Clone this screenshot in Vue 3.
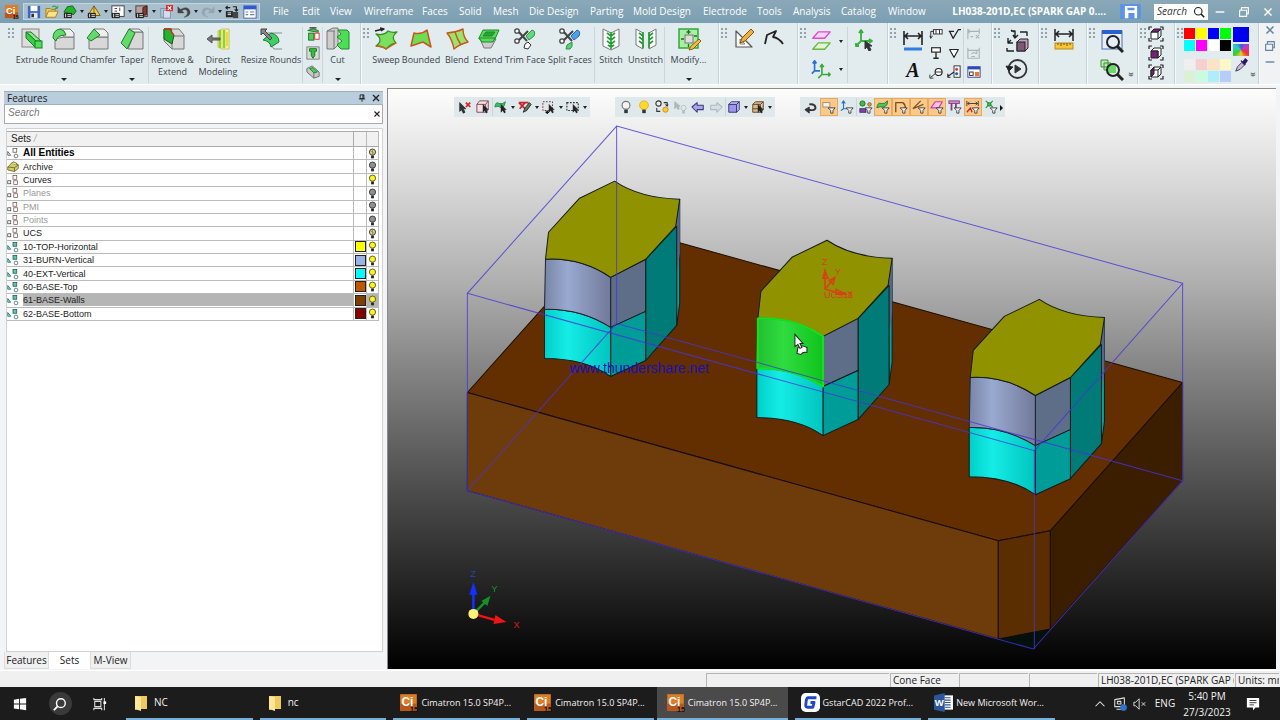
<script setup>
import { h } from 'vue'

const p = (d, fill = 'none', stroke = '#555', w = 1) =>
  `<path d="${d}" fill="${fill}" stroke="${stroke}" stroke-width="${w}" stroke-linejoin="round"/>`
const c = (x, y, r, fill = 'none', stroke = '#333', w = 1) =>
  `<circle cx="${x}" cy="${y}" r="${r}" fill="${fill}" stroke="${stroke}" stroke-width="${w}"/>`
const G = '#35d045'
const LG = '#8be38a'
const GR = '#d8d8d8'
const funnel = p('M7 9H15L12.5 12V15H10V12Z', '#fff', '#333')
const arrow = p('M8 5V14L10 12L12 15L13 14L12 11H14Z', '#222', '#222', 0.5)
const lens = c(13, 13, 6, 'none', '#222', 2) + p('M17 17L23 23', 'none', '#222', 3)
const scissors =
  p('M5 4L14 14M5 14L15 4', 'none', '#444', 2) + c(4, 4, 2.2, '#fff', '#444', 1.3) + c(4, 14, 2.2, '#fff', '#444', 1.3)
const cubeFrame =
  p('M1 4V1H4M12 1H15V4M15 12V15H12M4 15H1V12', 'none', '#222', 1.2)
const ci =
  '<rect x="1" y="1" width="14" height="14" fill="#dd7d27"/><rect x="1" y="9" width="14" height="6" fill="#b8561c"/>' +
  '<text x="7" y="11" font-size="10" font-family="Liberation Sans" font-weight="bold" fill="#fff" text-anchor="middle">Ci</text>' +
  '<text x="16" y="16" font-size="6" font-family="Liberation Sans" font-weight="bold" fill="#111" text-anchor="end">15</text>'
const mini = '<rect x="1" y="9" width="9" height="6" fill="#222"/>' + p('M3 10V14M5 11H9M5 13H9', 'none', '#eee')

const icons = {
  ci: [16, ci],
  save: [16, '<rect x="1" y="1" width="14" height="14" fill="#3c66c4"/><rect x="4" y="1" width="8" height="6" fill="#fff"/><rect x="4" y="9" width="8" height="6" fill="#e8e8e8"/><rect x="5" y="10" width="3" height="4" fill="#333"/>'],
  open: [16, p('M1 14V4H6L7 5H12V7', '#f3c65b', '#9b7a25') + p('M1 14L4 7H15L12 14Z', '#ffe08a', '#9b7a25') + p('M8 2Q12 0 14 4M14 4L11 4M14 4L15 1', 'none', '#3ea347', 1.3)],
  partg: [16, p('M1 8L5 2L11 1L15 7L12 11Z', '#22b52c', '#145a18') + mini],
  asmy: [16, p('M8 1L15 12H1Z', '#f2cd48', '#6b5412') + p('M8 1V12', 'none', '#6b5412') + mini],
  draft: [16, '<rect x="1" y="1" width="14" height="12" fill="#fff" stroke="#333"/>' + p('M4 4H7M10 3V7M4 7H7', 'none', '#333') + mini],
  nc: [16, '<rect x="1" y="1" width="13" height="12" fill="#b7a29c" stroke="#4a3530"/>' + p('M9 3L13 1V11L9 12Z', '#8c3a2c', '#3b1b15') + mini],
  close: [16, '<rect x="2" y="4" width="8" height="10" fill="#b4c6d8" stroke="#7a90a8"/><rect x="5" y="6" width="8" height="9" fill="#d3deea" stroke="#7a90a8"/><rect x="8" y="0" width="8" height="7" fill="#dd2b31"/>' + p('M10 1.5L14 5.5M14 1.5L10 5.5', 'none', '#fff', 1.4)],
  undo: [16, p('M1 2V9H8L5.5 6.5Q11 3 12 8Q12.5 12 8 14Q15 13 15 8Q13 0 4 5Z', '#444', '#444', 0.5)],
  redo: [16, p('M15 2V9H8L10.5 6.5Q5 3 4 8Q3.500 12 8 14Q1 13 1 8Q3 0 12 5Z', '#93a5b0', '#93a5b0', 0.5)],
  swap: [16, '<rect x="1" y="7" width="8" height="7" fill="#222"/><rect x="9" y="8" width="6" height="7" fill="#444"/>' + p('M1 3H6M3 1L1 3L3 5M9 2H13V6M11 5L13 7L15 5', 'none', '#222', 1.4) + p('M3 9H7M3 11H7', 'none', '#fff')],
  tbl: [16, '<rect x="1" y="1" width="14" height="14" fill="#fff" stroke="#3c5ec0"/><rect x="1" y="1" width="14" height="4" fill="#3158d2"/>' + p('M3 8H6M3 11H6M8 8H13M8 11H13', 'none', '#6f7f9c', 1.2)],
  extrude: [24, '<rect x="2" y="2" width="17" height="18" fill="#dfdcdc" stroke="#8a8480"/>' + p('M6 5L11 5L21 14L16 14Z', LG, '#1c7a26') + p('M6 5V11L16 21V14Z', G, '#1c7a26') + '<rect x="15" y="14" width="7" height="7" fill="#4be058" stroke="#1c7a26"/>'],
  round: [24, p('M12 10H22V22H3V12Z', GR, '#777') + p('M8 2H18L22 6V10H12Z', '#eee', '#777') + p('M1 11Q1 3 8 2Q13 3 14 8Q5 8 4 14Z', '#62db6a', '#237a2b')],
  chamfer: [24, p('M12 10H22V22H3V12Z', GR, '#777') + p('M8 2H18L22 6V10H12Z', '#eee', '#777') + p('M1 11L8 2L14 8L5 14Z', '#62db6a', '#237a2b')],
  taper: [24, p('M15 5H23V22H8Z', GR, '#777') + p('M9 2H19L23 5H14Z', '#eee', '#777') + p('M9 2L15 6L7 22L1 16Z', '#62db6a', '#237a2b')],
  remove: [24, p('M3 2H18L23 8V22H11L3 14Z', GR, '#777') + p('M11 9H23M11 9V22', 'none', '#777') + p('M3 2H10Q10 6 13 8L11 17L3 12Z', '#23b32e', '#155a1b') + p('M3 2H10Q10 6 13 8', 'none', '#c73326', 1.5)],
  direct: [24, p('M12 4L16 2H23V22H16L12 20Z', '#f5f0ab', '#c6c65b') + p('M14 3V21M18 3V21', 'none', '#98cf2e', 2.5) + p('M21 5V19', 'none', '#e8dc3c', 2) + p('M1 12L6 8V11H14V13H6V16Z', '#777', '#555')],
  resize: [24, p('M8 6H23M8 13L15 22H23', 'none', '#8a8a8a') + p('M4 13L12 6Q20 8 20 15L12 20Q11 14 4 13Z', '#40cf66', '#227a38') + p('M2 2L8 2L6 4L13 11L11 13L4 6L2 8Z', '#888', '#444')],
  mirror: [16, p('M2 4L8 2L14 4V6L8 5Z', '#53cc5b', '#1d6b25') + '<rect x="3" y="7" width="6" height="8" fill="#53cc5b" stroke="#1d6b25"/><rect x="10" y="7" width="5" height="7" fill="#fff" stroke="#d22"/>' + p('M4 1H12', 'none', '#333', 1.5)],
  drill: [16, '<rect x="1" y="1" width="14" height="14" fill="#d7dcd9" stroke="#777"/>' + p('M4 3H12V6H10V11L8 14L6 11V6H4Z', '#2dc33c', '#17701f')],
  hole: [16, p('M1 4L7 1L15 8V13L9 15L1 8Z', '#c9c9c9', '#666') + p('M4 4L8 3L13 8L9 9Z', '#48cf55', '#1e7a29') + p('M9 9V15', 'none', '#666')],
  cut: [24, p('M1 4L7 1H12V18L8 22H1Z', '#cfcccc', '#777') + p('M1 4H9M8 4V22', 'none', '#777') + p('M12 3H21L23 5V22H15L11 18L16 14L11 10L15 7Z', '#4cdf55', '#25852e')],
  sweep: [24, p('M2 7Q10 9 14 4Q18 6 23 5Q16 10 22 16Q17 17 12 22Q8 19 2 19Q10 13 2 7Z', '#7be05f', '#3d8a2d', 1.3) + p('M1 4L9 2M6 1L10 2L7 4', 'none', '#222', 1.4) + p('M2 19Q8 19 12 22L22 16', 'none', '#c8641e', 1.3)],
  bounded: [24, p('M2 19L5 6Q12 8 18 3L22 20L14 15Z', '#6edd51', '#c8561e', 1.5)],
  blend: [24, p('M2 6Q12 5 18 2Q18 10 23 15Q15 17 9 22Q7 12 2 6Z', '#9be46c', '#c8561e', 1.4) + p('M10 5Q12 12 16 18', 'none', '#c8561e', 1.4)],
  extend: [24, p('M4 12L8 21H15L20 12Z', '#cdcdcd', '#777') + p('M3 11L7 3H23L19 12H3Z', '#54dd5a', '#25852e') + p('M7 9L10 5H19L16 9Z', '#26a530', '#25852e') + p('M3 11H19L17 15H6Z', '#54dd5a', '#25852e')],
  trimf: [24, scissors + p('M13 9L19 3Q23 4 21 9L16 13Z', '#5edb7b', '#3a8a50') + p('M12 17L15 15L18 18L15 22L11 21Z', '#fff', '#333')],
  splitf: [24, scissors + p('M13 9L19 3Q23 4 21 9L16 13Z', '#4b9ff0', '#2c68a8') + p('M9 18L14 15Q15 20 12 22L8 22Z', '#4fd873', '#3a8a50')],
  stitch: [24, p('M4 2L12 6L20 2V19L12 23L4 19Z', '#fff', '#777') + p('M12 5V22M8 6L12 9L16 6M8 10L12 13L16 10M8 14L12 17L16 14M9 18L12 20L15 18', 'none', '#249c34', 1.6)],
  unstitch: [24, p('M2 2L9 6V22L2 18ZM22 2L15 6V22L22 18Z', '#fff', '#777') + p('M9 5V21M5 6L9 9M5 10L9 13M5 14L9 17M15 5V21M19 6L15 9M19 10L15 13M19 14L15 17', 'none', '#249c34', 1.6)],
  modify: [24, '<rect x="2" y="2" width="19" height="19" fill="#a8f0a0" stroke="#35a53f" stroke-width="1.500"/><rect x="8" y="8" width="8" height="8" fill="#ddd" stroke="#777"/>' + p('M11.500 3V7M9.500 5H13.500M11.500 17V20M4 12H7M17 9H20', 'none', '#17701f', 1.3) + p('M12 23L14 19L22 12L24 14L16 22Z', '#f3bd42', '#8b5a1b')],
  sketch: [24, p('M4 4V20H20Z', '#fff', '#555', 1.2) + p('M8 12V17H13Z', '#ddd', '#888') + p('M8 16L10 11L19 2L22 5L13 14Z', '#f0b040', '#80541a')],
  curve: [24, p('M3 17L5 8L14 4L11 10Q17 11 21 17', 'none', '#222', 1.8)],
  planes: [24, p('M3 9L9 2H22L16 9Z', '#fbd4fb', '#d84bd8', 1.5) + p('M3 21L9 14H22L16 21Z', '#dff8d2', '#6db544', 1.5)],
  ucs2: [24, p('M5 4V14H11M5 14L2 17M3 6L5 3L7 6', 'none', '#2b6fd0', 1.8) + p('M13 8V18H22M13 18L9 22M11 10L13 7L15 10M20 16L22 18L20 20', 'none', '#3cab35', 1.8)],
  ucs: [24, p('M10 4V14H20M10 14L5 19M8 6L10 3L12 6M18 12L21 14L18 16M5 16V19H8', 'none', '#36b03a', 1.8) + p('M14 14V22L16 20L18 24L20 23L18 19H21Z', '#333', '#333')],
  dim: [24, p('M3 2V16M21 2V16M4 7H20M7 4L4 7L7 10M17 4L20 7L17 10', 'none', '#222', 1.6) + p('M3 20H21', 'none', '#2f7de1', 3)],
  letter: [24, '<text x="12" y="20" text-anchor="middle" font-family="Liberation Serif" font-style="italic" font-weight="bold" font-size="20" fill="#111">A</text>'],
  tol: [16, '<rect x="5" y="3" width="10" height="5" fill="#fff" stroke="#222"/>' + p('M8 3V8M12 3V8M5 5H2V12M1 10L2 13L4 10', 'none', '#222')],
  datum: [16, '<rect x="3" y="2" width="10" height="5" fill="#fff" stroke="#222" stroke-width="1.300"/>' + p('M8 7V13M5 14H11', 'none', '#222', 1.5)],
  balloon: [16, c(11, 8, 4, '#fff', '#222', 1.3) + p('M7 8H15M7 10L2 14M1 11V15H5', 'none', '#222')],
  surf: [16, p('M2 5H8M3 5L7 13L13 3H16', 'none', '#222', 1.3)],
  tri: [16, p('M3 4H13L8 13Z', '#fff', '#222', 1.2)],
  note: [16, '<rect x="8" y="1" width="7" height="13" fill="#fff" stroke="#222"/>' + p('M8 8L1 13M1 10V14H4', 'none', '#222', 1.3) + c(11, 5, 1.3, '#d33', '#d33') + c(11, 10, 1.3, '#25c', '#25c')],
  dimx: [16, p('M1 2V14M14 2V8M1 5H14M3 3L1 5L3 7M10 9L14 13M14 9L10 13M4 11H7', 'none', '#aab2b5', 1.3)],
  dimr: [16, p('M1 2V14H14V2M1 5H14M5 9Q8 6 11 9M11 9V6M5 12H9', 'none', '#aab2b5', 1.3)],
  view: [16, '<rect x="1" y="2" width="14" height="12" fill="#fff" stroke="#2a3f9e"/><rect x="1" y="2" width="14" height="3" fill="#2b47bd"/><rect x="3" y="8" width="4" height="4" fill="none" stroke="#222"/><rect x="9" y="8" width="5" height="5" fill="#e27a33"/>'],
  exch: [24, p('M12 13L15 10H23V19L20 22H12Z', '#c79fbe', '#222') + '<rect x="12" y="13" width="8" height="9" fill="#7b5a72" stroke="#222"/>' + p('M6 2H10V8M8 6L10 9L13 6M9 3L6 1M3 9V14H8M6 11L3 14M15 3H22V7M2 19V22H9', 'none', '#222', 1.4)],
  replay: [24, c(12.500, 12, 9, 'none', '#333', 1.8) + p('M1 9L4 14L8 10Z', '#222', '#222') + p('M10 8V16L16 12Z', '#333', '#333')],
  measure: [24, p('M3 2V14M21 2V14M4 7H20M7 4L4 7L7 10M17 4L20 7L17 10', 'none', '#222', 1.5) + '<rect x="3" y="16" width="18" height="6" fill="#f5c738" stroke="#b58a1a"/>' + p('M6 16V18M9 16V19M12 16V18M15 16V19M18 16V18', 'none', '#6b5010')],
  zoomw: [24, '<rect x="2" y="2" width="20" height="18" fill="#e6eff8" stroke="#4a6fb5"/><rect x="2" y="1" width="20" height="4" fill="#2b5fd0"/>' + lens],
  zooms: [24, p('M1 3H8V10H1ZM4 6H11V13H4Z', '#b9e8b0', '#3f8f3a') + '<rect x="8" y="8" width="8" height="8" fill="#69d868"/>' + lens],
  cube1: [16, cubeFrame + p('M3 6H10V13H3Z', '#fff', '#222') + p('M3 6L6 3H13L10 6Z', '#7a1f78', '#222') + p('M13 3V10L10 13', 'none', '#222')],
  cube2: [16, cubeFrame + p('M3 6L6 3H13V10L10 13V6Z', '#fff', '#222') + p('M3 6H10V13H3Z', '#7a1f78', '#222')],
  cube3: [16, cubeFrame + p('M3 6L6 3H13V10L10 13H3Z', '#fff', '#222') + p('M3 6L6 3V10L3 13Z', '#7a1f78', '#222') + p('M3 6H10V13M10 6L13 3', 'none', '#222')],
  dropper: [16, p('M2 15L4 10L9 5L12 8L7 13Z', '#c9b8e0', '#333') + p('M8 3L13 8M10 5L13 1L15 3L12 7Z', '#2a1660', '#2a1660', 1.6)],
  floppy: [16, '<path d="M1 1H15V15H1ZM4 3V6H12V3ZM5 9V15H12V9Z" fill="#fff" fill-rule="evenodd"/>'],
  mag: [16, c(7, 7, 5, 'none', '#222', 1.5) + p('M10.500 10.500L15 15', 'none', '#222', 2)],
  min: [16, p('M3 8H13', 'none', 'currentColor', 1.6)],
  restore: [16, p('M3 6H11V13H3ZM5 6V3H13V10H11', 'none', 'currentColor', 1.3)],
  x: [16, p('M4 4L12 12M12 4L4 12', 'none', 'currentColor', 1.8)],
  pin: [16, p('M5 3H11V9H5ZM9.500 3V9M3 9.500H13M8 10V14', 'none', '#222', 1.5)],
  setall: [16, p('M1 6V11L5 11Z', '#fff', '#444') + '<rect x="8" y="2" width="5" height="5" fill="#fff" stroke="#555"/>' + c(12, 12, 2.5, '#fff', '#555')],
  arch: [16, p('M1 8L6 3L15 5V10L10 14L1 12Z', '#d5cf6a', '#5a561a') + p('M1 8L10 9V14M10 9L15 5', 'none', '#5a561a') + p('M6 3L8 1L13 3V5', '#e8e3a0', '#5a561a')],
  setgrp: [16, '<rect x="1" y="9" width="4" height="4" fill="#fff" stroke="#444"/><rect x="8" y="2" width="5" height="5" fill="#fff" stroke="#755"/><rect x="9" y="9" width="5" height="5" fill="#fff" stroke="#755"/>'],
  setuser: [16, p('M1 6V11L5 11Z', '#7fd', '#255') + '<rect x="8" y="2" width="5" height="5" fill="#5cc9a8" stroke="#255"/>' + c(12, 12, 2.5, '#fff', '#366')],
  bulbon: [16, c(8, 6, 4.5, '#fbf32a', '#55520c', 1.3) + '<rect x="6" y="11" width="4" height="4" fill="#222"/>'],
  bulbhalf: [16, c(8, 6, 4.5, '#d8da7a', '#333', 1.3) + p('M5 4L11 8M8 2V10', 'none', '#777') + '<rect x="6" y="11" width="4" height="4" fill="#222"/>'],
  bulboff: [16, c(8, 6, 4.5, '#909090', '#333', 1.3) + '<rect x="6" y="11" width="4" height="4" fill="#222"/>'],
  bulbw: [16, c(8, 6, 4.5, '#f4f4f4', '#777', 1.3) + '<rect x="6" y="11" width="4" height="4" fill="#333"/>'],
  bulby: [16, c(8, 6, 5, '#ffd92e', '#e0ab12') + '<rect x="6" y="11" width="4" height="4" fill="#333"/>'],
  bulbsw: [16, c(4, 4, 3, '#eee', '#333', 1.3) + c(12, 11, 3, '#ffc92e', '#c8900c') + p('M10 3H14V7M2 9V13H6M12 5L14 7L15 5', 'none', '#333', 1.2)],
  bulbp: [16, p('M2 2V10L4 8L6 11L7 10L6 7H8Z', '#aeb8bb', '#aeb8bb') + c(12, 9, 3, 'none', '#b5bfc2') + p('M11 12H13V15H11Z', '#b5bfc2', '#b5bfc2')],
  left: [16, p('M1 8L7 3V6H14V11H7V14Z', '#aaa6e6', '#3c3a80', 1.2)],
  right: [16, p('M15 8L9 3V6H2V11H9V14Z', '#d8dfe1', '#aeb8bb', 1.2)],
  box: [16, p('M2 5H11V14H2Z', '#9d96ea', '#2e2a72') + p('M2 5L5 2H14L11 5ZM14 2V11L11 14V5Z', '#c4bff6', '#2e2a72')],
  boxsel: [16, p('M2 5H11V14H2ZM2 5L5 2H14L11 5M14 2V11L11 14M2 10H11', '#d9b98c', '#5c3a18') + arrow],
  pickx: [16, p('M2 3V13L4 11L6 15L8 14L6 10H9Z', '#333', '#333') + p('M9 3L14 8M14 3L9 8', 'none', '#d8202a', 2)],
  pickbox: [16, p('M1 5L4 1H14V11L11 14H1Z', '#f3dfe4', '#7d3c4e') + p('M1 5H11V14M11 5L14 1', 'none', '#7d3c4e') + arrow],
  pickf: [16, p('M1 8Q2 1 6 4Q10 5 13 2Q12 8 9 9Q4 6 1 8Z', '#3bbd68', '#238547') + arrow],
  pickp: [16, p('M1 3H12M1 3L8 10M8 3L2 10', 'none', '#c8202a', 2) + p('M6 14L8 9L13 3L15 5L10 12Z', '#5b7f58', '#222')],
  pickr: [16, '<rect x="1" y="2" width="11" height="10" fill="none" stroke="#7d1f2e" stroke-dasharray="2 1.500"/>' + p('M4 14H8M6 12V16', 'none', '#111', 1.5) + arrow],
  pickd: [16, '<rect x="1" y="3" width="13" height="9" fill="none" stroke="#333" stroke-width="1.300" stroke-dasharray="2 1.500"/>' + arrow],
  back: [16, p('M4 11Q14 13 13 8Q12 4 6 5', 'none', '#333', 2.2) + p('M6 8L1 11L6 15Z', '#333', '#333')],
  f1: [16, '<rect x="1" y="3" width="8" height="5" fill="#f7f2dc" stroke="#998877"/>' + funnel],
  f2: [16, p('M4 2V10H10M2 4L4 1L6 4M1 12L4 10', 'none', '#2b6fd0', 1.3) + funnel],
  f3: [16, c(4, 4, 3, '#42bb46', '#1d6b25') + c(12, 5, 2, '#e89a4b', '#8a5218') + '<rect x="1" y="10" width="7" height="4" fill="#7c4aa8" stroke="#3e2260"/>' + funnel],
  f4: [16, p('M1 9Q2 2 6 4Q10 5 13 1Q14 6 9 8Q4 7 1 9Z', '#4cc957', '#1d7a2b') + funnel],
  f5: [16, p('M2 14V3L10 3Q13 5 13 9', 'none', '#775021', 1.5) + funnel],
  f6: [16, p('M1 10L10 1M1 10L13 5', 'none', '#775021', 1.3) + funnel],
  f7: [16, p('M1 9L6 2H14L10 9Z', '#ffc2ec', '#d33fa0', 1.3) + funnel],
  f8: [16, '<rect x="1" y="1" width="12" height="3" fill="#d489c8" stroke="#843a78"/>' + p('M4 4V12M9 4V9', 'none', '#843a78', 2) + funnel],
  f9: [16, p('M1 1V7M14 1V7M2 4H13M4 2L2 4L4 6M11 2L13 4L11 6', 'none', '#333') + p('M1 14L5 9L7 14', 'none', '#c22', 1.4) + funnel],
  f10: [16, p('M2 1L10 8M10 1L2 9', 'none', '#259a3d', 1.5) + c(6, 5, 2, '#3bbf55', '#1d7a2b') + funnel],
  win: [16, '<path d="M1 3L7 2V7.500H1ZM8 2L15 1V7.500H8ZM1 8.500H7V14L1 13ZM8 8.500H15V15L8 14Z" fill="#fff"/>'],
  magw: [16, c(9, 7, 5, 'none', '#fff', 1.6) + p('M5.500 10.500L1 15', 'none', '#fff', 2)],
  task: [16, p('M1 1V3H10V1M1 15V13H10V15M2 5H9V11H2ZM13 1V15', 'none', '#ddd', 1.2) + '<rect x="12" y="5" width="3" height="3" fill="#fff"/>'],
  folder: [16, '<path d="M2 1H14V14H7L2 15Z" fill="#f0c95c"/><path d="M2 1L8 2V16L2 14Z" fill="#ffe69a"/>'],
  gstar: [16, '<rect width="16" height="16" rx="4" fill="#fff"/>' + p('M13 4H6Q5 4 4.500 6L4 10Q3.800 12 5.500 12H10L11 8H8', 'none', '#1f49c8', 2.4)],
  word: [16, '<rect x="7" y="2" width="9" height="12" fill="#fff"/>' + p('M9 4H14M9 6H14M9 8H14M9 10H14M9 12H14', 'none', '#2b579a') + '<path d="M0 2L9 0V16L0 14Z" fill="#2b579a"/><text x="4.500" y="11" font-size="8" font-family="Liberation Sans" font-weight="bold" fill="#fff" text-anchor="middle">W</text>'],
  up: [16, p('M2 11L8 5L14 11', 'none', '#eee', 1.4)],
  tray: [16, p('M2 3L13 1V11H2ZM5 8V5H9V8H5M4 14H9', 'none', '#ddd', 1.2) + c(12, 12, 3.5, '#2f74c8', '#2f74c8')],
  vol: [16, p('M1 6H3L7 2V14L3 10H1ZM10 6L14 10M14 6L10 10', 'none', '#ddd', 1.1)],
  notif: [16, '<path d="M1 1H15V12H11L8 15V12H1Z" fill="#fff"/>' + p('M4 4H12M4 6.500H12M4 9H9', 'none', '#222')],
}
const Ico = (props) =>
  h('svg', { viewBox: `0 0 ${icons[props.n][0]} ${icons[props.n][0]}`, 'aria-hidden': 'true', innerHTML: icons[props.n][1] })
Ico.props = ['n']

const quick = [
  ['save', 'Save'], ['open', 'Open'], ['partg', 'New part', 1], ['asmy', 'New assembly', 1], ['draft', 'New drafting', 1],
  ['nc', 'New NC', 1], ['close', 'Close'], ['undo', 'Undo', 1], ['redo', 'Redo', 1], ['swap', 'Switch'], ['tbl', 'Table'],
]
const menus = ['File', 'Edit', 'View', 'Wireframe', 'Faces', 'Solid', 'Mesh', 'Die Design', 'Parting', 'Mold Design', 'Electrode', 'Tools', 'Analysis', 'Catalog', 'Window']
const solid = [
  { n: 'extrude', l: ['Extrude'] }, { n: 'round', l: ['Round'], d: 1 }, { n: 'chamfer', l: ['Chamfer'] }, { n: 'taper', l: ['Taper'], d: 1 },
  { n: 'remove', l: ['Remove &', 'Extend'], s: 1 }, { n: 'direct', l: ['Direct', 'Modeling'] }, { n: 'resize', l: ['Resize Rounds'] },
]
const faces = [
  { n: 'sweep', l: ['Sweep'] }, { n: 'bounded', l: ['Bounded'] }, { n: 'blend', l: ['Blend'] }, { n: 'extend', l: ['Extend'] },
  { n: 'trimf', l: ['Trim Face'] }, { n: 'splitf', l: ['Split Faces'] }, { n: 'stitch', l: ['Stitch'], s: 1 },
  { n: 'unstitch', l: ['Unstitch'] }, { n: 'modify', l: ['Modify...'], s: 1, d: 1 },
]
const bright = ['#f00', '#ff0', '#00f', '#0f0', '#0ff', '#f0f', '#fff', '#000']
const pale = ['#efefef', '#f8cfcf', '#fbe3c3', '#fbf8c6', '#dcf0d4', '#c8fbe0', '#aeeefb', '#b5cdf8']
const sets = [
  ['All Entities', 'setall', '', 'bulbhalf', 'bold'], ['Archive', 'arch', '', 'bulboff'], ['Curves', 'setgrp', '', 'bulbon'],
  ['Planes', 'setgrp', '', 'bulboff', 'dim'], ['PMI', 'setgrp', '', 'bulboff', 'dim'], ['Points', 'setgrp', '', 'bulboff', 'dim'],
  ['UCS', 'setgrp', '', 'bulbhalf'], ['10-TOP-Horizontal', 'setuser', '#ffff00', 'bulbon'], ['31-BURN-Vertical', 'setuser', '#9ab4e4', 'bulbon'],
  ['40-EXT-Vertical', 'setuser', '#00ffff', 'bulbon'], ['60-BASE-Top', 'setuser', '#bf5600', 'bulbon'],
  ['61-BASE-Walls', 'setuser', '#7d3e00', 'bulbon', 'sel'], ['62-BASE-Bottom', 'setuser', '#870000', 'bulbon'],
]
const floats = [
  [['pickx', 'Clear picks'], ['pickbox', 'Pick entity'], ['pickf', 'Pick face', 'ds'], ['pickp', 'Unpick', 'd'], ['pickr', 'Add by box', 'd'], ['pickd', 'Pick by box', 'd']],
  [['bulbw', 'Hide'], ['bulby', 'Show'], ['bulbsw', 'Toggle'], ['bulbp', 'Hide picked'], ['left', 'Previous'], ['right', 'Next'], ['box', 'Shading', 'ds'], ['boxsel', 'Render', 'd']],
  [['back', 'Reset'], ['f1', 'Filter sets', 'o'], ['f2', 'Filter UCS'], ['f3', 'Filter all', 's'], ['f4', 'Filter faces', 'o'], ['f5', 'Filter curves', 'o'], ['f6', 'Filter edges', 'o'], ['f7', 'Filter planes', 'o'], ['f8', 'Filter text'], ['f9', 'Filter dimensions', 'o'], ['f10', 'Filter points']],
]
const has = (v, k) => (v || '').includes(k)
const prisms = [{ x: 0, y: 0 }, { x: 212, y: 59 }, { x: 424, y: 118 }]
const tasks = [
  ['folder', 'NC'], ['folder', 'nc'], ['ci', 'Cimatron 15.0 SP4P...'], ['ci', 'Cimatron 15.0 SP4P...'], ['ci', 'Cimatron 15.0 SP4P...', 1],
  ['gstar', 'GstarCAD 2022 Prof...'], ['word', 'New Microsoft Wor...'],
]
</script>

<template>
  <div class="app">
    <header class="title">
      <Ico n="ci" class="logo" />
      <div class="quick">
        <button v-for="q in quick" :key="q[0]" :aria-label="q[1]" :class="{ combo: q[2] }">
          <Ico :n="q[0]" class="i14" /><i v-if="q[2]" class="car"></i>
        </button>
      </div>
      <nav class="menu"><button v-for="m in menus" :key="m">{{ m }}</button></nav>
      <strong class="doc">LH038-201D,EC (SPARK GAP 0....</strong>
      <button class="quicksave" aria-label="Save document"><Ico n="floppy" class="i14" /></button>
      <label class="find"><input aria-label="Search commands" placeholder="Search" /><Ico n="mag" class="i12" /></label>
      <div class="win">
        <button aria-label="Minimize"><Ico n="min" class="i14" /></button>
        <button aria-label="Restore"><Ico n="restore" class="i14" /></button>
        <button aria-label="Close"><Ico n="x" class="i14" /></button>
      </div>
    </header>

    <div class="ribbon">
      <section class="grp g-solid">
        <i class="grip"></i>
        <button v-for="b in solid" :key="b.n" class="big" :class="{ sep: b.s }">
          <Ico :n="b.n" class="i24" /><span v-for="t in b.l" :key="t">{{ t }}</span><i v-if="b.d" class="car low"></i>
        </button>
        <div class="stack sep">
          <button aria-label="Mirror"><Ico n="mirror" class="i14" /></button>
          <button aria-label="Drill"><Ico n="drill" class="i14" /></button>
          <button aria-label="Hole"><Ico n="hole" class="i14" /></button>
        </div>
        <button class="big sep"><Ico n="cut" class="i24" /><span>Cut</span><i class="car low"></i></button>
      </section>
      <section class="grp g-faces">
        <i class="grip"></i>
        <button v-for="b in faces" :key="b.n" class="big" :class="{ sep: b.s }">
          <Ico :n="b.n" class="i24" /><span v-for="t in b.l" :key="t">{{ t }}</span><i v-if="b.d" class="car low"></i>
        </button>
      </section>
      <section class="grp g-sketch">
        <i class="grip"></i>
        <button class="big" aria-label="Sketcher"><Ico n="sketch" class="i24" /></button>
        <button class="big" aria-label="Composite"><Ico n="curve" class="i24" /></button>
      </section>
      <section class="grp g-planes">
        <i class="grip"></i>
        <div class="pair">
          <button aria-label="Planes"><Ico n="planes" class="i22" /></button>
          <button aria-label="UCS list"><Ico n="ucs2" class="i22" /></button>
        </div>
        <div class="pair"><i class="car"></i><i class="car"></i></div>
        <button class="big sep" aria-label="Activate UCS"><Ico n="ucs" class="i24" /></button>
      </section>
      <section class="grp g-dim">
        <i class="grip"></i>
        <div class="pair">
          <button aria-label="Dimension"><Ico n="dim" class="i24" /></button>
          <button aria-label="Text"><Ico n="letter" class="i24" /></button>
        </div>
        <div class="stack">
          <button aria-label="Tolerance"><Ico n="tol" class="i14" /></button>
          <button aria-label="Datum"><Ico n="datum" class="i14" /></button>
          <button aria-label="Balloon"><Ico n="balloon" class="i14" /></button>
        </div>
        <div class="stack">
          <button aria-label="Surface finish"><Ico n="surf" class="i14" /></button>
          <button aria-label="Symbol"><Ico n="tri" class="i14" /></button>
          <button aria-label="Note"><Ico n="note" class="i14" /></button>
        </div>
        <div class="stack sep">
          <button aria-label="Delete dimension" disabled><Ico n="dimx" class="i14" /></button>
          <button aria-label="Update dimension" disabled><Ico n="dimr" class="i14" /></button>
          <button aria-label="View"><Ico n="view" class="i14" /></button>
        </div>
      </section>
      <section class="grp g-exch">
        <i class="grip"></i>
        <div class="pair">
          <button aria-label="Exchange"><Ico n="exch" class="i24" /></button>
          <button aria-label="Replay"><Ico n="replay" class="i24" /></button>
        </div>
      </section>
      <section class="grp g-meas">
        <i class="grip"></i>
        <button class="big" aria-label="Measure"><Ico n="measure" class="i24" /></button>
      </section>
      <section class="grp g-zoom">
        <i class="grip"></i>
        <div class="pair">
          <button aria-label="Zoom window"><Ico n="zoomw" class="i24" /></button>
          <button aria-label="Zoom selection"><Ico n="zooms" class="i24" /></button>
        </div>
        <span class="more">&#187;</span>
      </section>
      <section class="grp g-cube">
        <i class="grip"></i>
        <div class="stack">
          <button aria-label="Top view"><Ico n="cube1" class="i16" /></button>
          <button aria-label="Front view"><Ico n="cube2" class="i16" /></button>
          <button aria-label="Side view"><Ico n="cube3" class="i16" /></button>
        </div>
      </section>
      <section class="grp g-color">
        <i class="grip"></i>
        <div class="pal">
          <div class="sw"><button v-for="b in bright" :key="b" :aria-label="b" :style="{ background: b }"></button></div>
          <div class="sw"><button v-for="b in pale" :key="b" :aria-label="b" :style="{ background: b }"></button></div>
        </div>
        <div class="cur">
          <button class="blue" aria-label="Current colour"></button>
          <button class="spec" aria-label="More colours"></button>
          <button aria-label="Pick colour"><Ico n="dropper" class="i14" /></button>
        </div>
        <span class="more">&#187;</span>
      </section>
      <div class="mdi">
        <button aria-label="Close document"><Ico n="x" class="i14" /></button>
        <button aria-label="Restore document"><Ico n="restore" class="i14" /></button>
        <button aria-label="Minimize document"><Ico n="min" class="i14" /></button>
      </div>
    </div>

    <main class="main">
      <aside class="side">
        <div class="phead"><span>Features</span>
          <button aria-label="Pin"><Ico n="pin" class="i10" /></button>
          <button aria-label="Close panel"><Ico n="x" class="i12" /></button>
        </div>
        <div class="psearch"><input aria-label="Search features" placeholder="Search" /><button aria-label="Clear search"><Ico n="x" class="i10" /></button></div>
        <div class="list">
          <table>
            <thead><tr><th>Sets <i>/</i></th><th class="cc"></th><th class="cb"></th></tr></thead>
            <tbody>
              <tr v-for="s in sets" :key="s[0]" :class="s[4]">
                <td class="name"><div><Ico :n="s[1]" class="i12" /><span>{{ s[0] }}</span></div></td>
                <td class="cc"><b v-if="s[2]" :style="{ background: s[2] }"></b></td>
                <td class="cb"><Ico :n="s[3]" class="i11" /></td>
              </tr>
            </tbody>
          </table>
        </div>
        <div class="tabs"><button>Features</button><button class="on">Sets</button><button>M-View</button></div>
      </aside>

      <section class="view">
        <svg class="scene" viewBox="388 89 888 579" preserveAspectRatio="xMidYMid slice">
          <defs>
            <linearGradient id="gb"><stop offset="0" stop-color="#7885a6" /><stop offset=".35" stop-color="#99a9d0" /><stop offset="1" stop-color="#72799a" /></linearGradient>
            <linearGradient id="gc"><stop offset="0" stop-color="#00cfc9" /><stop offset=".35" stop-color="#16ece6" /><stop offset="1" stop-color="#00c4be" /></linearGradient>
            <linearGradient id="gg"><stop offset="0" stop-color="#20bf30" /><stop offset=".4" stop-color="#30dc40" /><stop offset="1" stop-color="#0fc41c" /></linearGradient>
          </defs>
          <g stroke="#1c0e00" stroke-linejoin="round">
            <path d="M468 392L617 225L1182 382L1050 530L998 540Z" fill="#632e00" />
            <path d="M468 392L998 540V638L468 490Z" fill="#6e3b0a" />
            <path d="M998 540L1050 530V628L998 638Z" fill="#5a2e00" />
            <path d="M1050 530L1182 382V480L1050 628Z" fill="#3b1d00" />
            <path d="M998 638L1050 628L1033 648Z" fill="#04100c" stroke="none" />
          </g>
          <g v-for="(q, k) in prisms" :key="k" :transform="`translate(${q.x} ${q.y})`" stroke="#111c1c" stroke-linejoin="round">
            <path d="M676 226L680 199V303L677 325Z" fill="#0b9e9a" />
            <path d="M676 226L680 199V253L677 275Z" fill="#56658a" stroke="none" />
            <path d="M646 259L677 226V325L646 360Z" fill="#007b77" />
            <path d="M611 277L646 259V311L611 327Z" fill="#5f6e88" />
            <path d="M611 327L646 311V360L611 376Z" fill="#009d98" />
            <path d="M545 309Q581 308 611 327V376Q586 358 545 358Z" fill="url(#gc)" />
            <path d="M546 259Q581 257 611 277V327Q581 308 545 309Z" :fill="k === 1 ? 'url(#gg)' : 'url(#gb)'" :stroke="k === 1 ? '#12e020' : '#1c2434'" />
            <path d="M615 181Q640 198 680 199L676 226L646 259L611 277Q581 257 546 259L549 232L580 198Z" fill="#919200" />
            <path v-if="k === 1" d="M611 277Q581 257 546 259V309Q581 308 611 327Z" fill="none" stroke="#12e020" stroke-width="2" />
          </g>
          <g class="wire">
            <path d="M617 126L1182 283L1034 450L468 293Z" />
            <path d="M617 323L1182 480L1033 648L468 490Z" />
            <path d="M617 126V323M1182 283V480M1034 450V648M468 293V490" />
          </g>
          <text class="mark" x="570" y="373">www.thundershare.net</text>
          <g fill="none" stroke="#d8401c" stroke-width="1.5">
            <path d="M825 289V271M823 278L825 270L828 278ZM825 289L834 278M829 280L835 277L833 284ZM825 289L845 294M836 289L847 294L836 294Z" />
          </g>
          <g class="ucs"><text x="822" y="265">Z</text><text x="835" y="275">Y</text><text x="847" y="297">X</text><text x="824" y="298">UCS12</text></g>
          <g fill="#fff" stroke="#222">
            <path d="M798 347Q802 344 807 347V352Q803 351 801 354L797 353Z" />
            <path d="M795 334V346L798 344L800 348L802 347L800 343H803Z" />
          </g>
          <g stroke-width="2.5">
            <path d="M474 613V590" stroke="#1430ff" /><path d="M470 594L474 581L478 594Z" fill="#1430ff" />
            <path d="M474 613L486 601" stroke="#149028" /><path d="M482 600L491 595L488 605Z" fill="#149028" />
            <path d="M474 613L495 619" stroke="#f01414" /><path d="M496 614L507 621L494 623Z" fill="#f01414" />
            <circle cx="474" cy="613" r="5" fill="#fff27a" />
          </g>
          <g class="axis"><text x="471" y="576" fill="#2a40b0">Z</text><text x="492" y="591" fill="#1c9030">Y</text><text x="514" y="627" fill="#e01818">X</text></g>
        </svg>
        <div class="floats">
          <div v-for="(f, k) in floats" :key="k" class="float">
            <button v-for="b in f" :key="b[0]" :aria-label="b[1]" :class="{ combo: has(b[2], 'd'), sep: has(b[2], 's'), orange: has(b[2], 'o') }">
              <Ico :n="b[0]" class="i14" /><i v-if="has(b[2], 'd')" class="car"></i>
            </button>
            <i v-if="k === 2" class="car side-car"></i>
          </div>
        </div>
      </section>
    </main>

    <footer class="status">
      <span class="blank"></span><span></span><span>Cone Face</span><span></span><span></span><span>LH038-201D,EC (SPARK GAP (</span><span>Units: mm</span>
    </footer>

    <div class="taskbar">
      <button class="sys" aria-label="Start"><Ico n="win" class="i14" /></button>
      <button class="sys" aria-label="Search"><em><Ico n="magw" class="i14" /></em></button>
      <button class="sys" aria-label="Task view"><Ico n="task" class="i14" /></button>
      <div class="apps">
        <button v-for="(t, k) in tasks" :key="k" :class="{ on: t[2], fold: k < 2 }"><Ico :n="t[0]" class="ticon" /><span>{{ t[1] }}</span></button>
      </div>
      <div class="tray">
        <button aria-label="Hidden icons"><Ico n="up" class="i12" /></button>
        <button aria-label="Sync"><Ico n="tray" class="i14" /></button>
        <button aria-label="Volume"><Ico n="vol" class="i14" /></button>
        <span class="lang">ENG</span>
        <time class="clock">5:40 PM<br />27/3/2023</time>
        <button aria-label="Notifications"><Ico n="notif" class="i14" /></button>
      </div>
    </div>
  </div>
</template>

<style>
body { background: #f0f0f0; }
</style>

<style scoped>
.app { display: flex; flex-direction: column; height: 100vh; overflow: hidden; font: 10px/13px "Open Sans", "Noto Sans", sans-serif; color: #222; background: #f0f0f0; }
.app * { box-sizing: border-box; }
button { display: flex; align-items: center; justify-content: center; margin: 0; padding: 0; border: 0; background: none; font: inherit; color: inherit; white-space: nowrap; }
input { min-width: 0; padding: 0; border: 0; outline: 0; background: none; font: inherit; font-style: italic; }
svg { display: block; flex: none; }
.i10 { width: 10px; height: 10px; } .i11 { width: 11px; height: 11px; } .i12 { width: 12px; height: 12px; }
.i14 { width: 14px; height: 14px; } .i16 { width: 16px; height: 16px; } .i22 { width: 22px; height: 22px; } .i24 { width: 24px; height: 24px; }
.car { flex: none; border: 2px solid transparent; border-top: 3px solid #222; border-bottom: 0; }

.title { display: flex; align-items: center; flex: none; height: 23px; background: linear-gradient(#8ba8b8, #7a9fb2); color: #fff; }
.logo { width: 15px; height: 15px; margin: 0 4px; }
.quick { display: flex; align-items: center; flex: none; width: 237px; height: 17px; padding-left: 1px; border: 1px solid #c5d5dd; background: #a9c0cc; }
.quick button { width: 18px; }
.quick .combo { width: 24px; gap: 3px; }
.menu { display: grid; grid-template-columns: 29px 28px 34px 58px 37px 34px 36px 61px 43px 70px 54px 36px 48px 47px 50px; margin-left: 13px; }
.menu button { justify-content: flex-start; }
.doc { margin-left: auto; white-space: nowrap; }
.quicksave { flex: none; width: 21px; height: 15px; margin: 0 13px 0 14px; background: #5c93e4; }
.find { display: flex; flex: none; align-items: center; width: 54px; height: 16px; padding: 0 3px; background: #fff; }
.find input { flex: 1; width: 30px; }
.find input::placeholder { color: #333; opacity: 1; }
.win { display: flex; flex: none; }
.win button { width: 24px; }

.ribbon { display: flex; flex: none; height: 62px; background: #e2ecef; border-bottom: 1px solid #fff; padding-left: 6px; color: #3b4348; }
.grp { display: grid; flex: none; align-items: stretch; border-right: 1px solid #c6d1d6; box-shadow: 1px 0 #f6fafb; padding-top: 4px; }
.grip { width: 8px; height: 12px; margin-left: 1px; background: radial-gradient(circle, #8fa2ae 1px, transparent 1px) 0 0 / 4px 4px; }
.big { flex-direction: column; justify-content: flex-start; position: relative; height: 56px; font-size: 9px; }
.big span { line-height: 12px; }
.big span:first-of-type { margin-top: 3px; }
.low { position: absolute; top: 51px; border-width: 3px; border-bottom: 0; }
.sep { border-left: 1px solid #ccd6da; }
.g-solid { grid-template-columns: 10px 32px 32px 36px 32px 48px 44px 62px 20px 30px; width: 355px; }
.g-faces { grid-template-columns: 11px 28px 42px 30px 32px 42px 48px 33px 37px 48px; width: 358px; }
.g-sketch { grid-template-columns: 10px 30px 30px; width: 79px; }
.g-planes { grid-template-columns: 10px 26px 13px 31px; width: 90px; }
.g-dim { grid-template-columns: 10px 29px 18px 18px 20px; width: 104px; }
.g-exch { grid-template-columns: 10px 30px; width: 47px; }
.g-meas { grid-template-columns: 10px 30px; width: 48px; }
.g-zoom { grid-template-columns: 10px 30px 10px; width: 51px; }
.g-cube { grid-template-columns: 9px 18px; width: 37px; }
.g-color { grid-template-columns: 9px 48px 17px 9px; width: 84px; }
.stack { display: flex; flex-direction: column; align-items: center; gap: 5px; height: 56px; }
.stack .i16 { margin: -1px 0; }
.pair { display: grid; grid-template-rows: 28px 28px; place-items: center; }
.more { align-self: end; transform: rotate(90deg); width: 9px; line-height: 9px; margin-bottom: 3px; }
.pal { display: grid; align-content: start; gap: 8px; padding-top: 1px; }
.sw { display: grid; grid-template-columns: repeat(4, 11px); grid-auto-rows: 11px; gap: 1px; }
.cur { display: flex; flex-direction: column; gap: 2px; align-items: center; }
.blue { width: 16px; height: 15px; background: #0000f0; }
.spec { width: 16px; height: 12px; background: conic-gradient(#36c, #c3c, #e33, #ec3, #3c3, #3cc, #36c); }
.mdi { display: flex; flex-direction: column; gap: 2px; margin-left: auto; width: 20px; align-items: center; background: #f0f2f3; color: #6484a6; }

.main { display: flex; flex: 1; min-height: 0; padding: 3px 4px 1px; background: #f3f4f5; }
.side { display: flex; flex-direction: column; flex: none; width: 379px; margin: 3px 4px 0 0; }
.phead { display: flex; align-items: center; gap: 3px; height: 14px; padding: 0 1px 0 3px; background: #b9cddd; border: 1px solid #9bb0c0; border-width: 1px 0; }
.phead span { flex: 1; }
.psearch { display: flex; height: 19px; border: 1px solid #aaa; border-top: 0; background: #fff; }
.psearch input { flex: 1; padding: 0 0 3px 3px; font: italic 10px "Liberation Sans", sans-serif; }
.psearch input::placeholder { color: #777; opacity: 1; }
.list { flex: 1; min-height: 0; margin: 4px 0 0 2px; padding-top: 2px; border: 1px solid #d2d2d2; background: #fff; }
table { width: 372px; height: 190px; border-collapse: collapse; table-layout: fixed; font: 9px/12px "Liberation Sans", sans-serif; color: #222; }
th { height: 15px; padding: 0 4px; text-align: left; font-size: 10px; font-weight: normal; background: #f1f1f1; border: 1px solid #aaa; border-left: 0; }
th i { color: #aaa; }
td { height: 13px; padding: 0; border-bottom: 1px solid #bbb; }
.cc { width: 13px; border-left: 1px solid #bbb; border-right: 1px solid #bbb; }
.cb { width: 12px; border-right: 1px solid #bbb; }
.name div { display: flex; align-items: center; height: 12px; gap: 4px; }
.name span { flex: 1; line-height: 12px; }
.cc b { display: block; width: 11px; height: 11px; border: 1px solid #222; margin-left: 1px; }
.bold { font-size: 10px; font-weight: bold; color: #000; }
.dim { color: #999; }
.sel .name span, .sel .cb { background: #b5b5b5; }
.tabs { display: grid; grid-template-columns: 45px 41px 41px; height: 17px; }
.tabs button { border: 1px solid #dcdcdc; border-top: 0; background: #f0f0f0; }
.tabs .on { background: #fff; border-color: #fff; }

.view { position: relative; flex: 1; min-width: 0; border: 1px solid #8a8a8a; border-width: 1px 0 0 1px; background: linear-gradient(#fdfdfd 0, #dedede 14%, #b0b0b0 33%, #858585 48%, #525252 67%, #1e1e1e 88%, #000 100%); }
.scene { width: 100%; height: 100%; }
.wire path { fill: none; stroke: #4636d8; stroke-opacity: .8; }
.mark { font: 14px "Liberation Sans", sans-serif; fill: #1a10b8; }
.ucs { font: 9px "Liberation Sans", sans-serif; fill: #d8401c; }
.axis { font: 9px "Liberation Sans", sans-serif; }
.floats { position: absolute; top: 8px; left: 66px; display: flex; }
.float { display: flex; height: 20px; padding: 0 2px; background: #dfe9ec; }
.float:nth-child(2) { margin-left: 25px; }
.float:nth-child(3) { margin-left: 25px; }
.float button { width: 18px; height: 18px; margin-top: 1px; }
.float .combo { width: 24px; gap: 3px; }
.float .orange { background: #fbc98a; border: 1px solid #e8a860; }
.float .side-car { margin-top: 8px; border: 3px solid transparent; border-left-color: #111; border-right: 0; height: 6px; }

.status { display: grid; grid-template-columns: 1fr 184px 69px 70px 69px 137px 45px; flex: none; height: 17px; padding-top: 2px; border-top: 1px solid #fff; background: #f0f0f0; }
.status span { overflow: hidden; white-space: nowrap; padding-left: 2px; margin-right: 1px; border: 1px solid #b5b5b5; border-width: 1px 0 0 1px; }
.status .blank { border: 0; }

.taskbar { display: flex; flex: none; height: 33px; background: #1c1c1c; color: #f2f2f2; }
.sys { width: 40px; }
.sys em { display: grid; place-items: center; width: 23px; height: 23px; border-radius: 50%; background: #3a3a3a; }
.apps { display: grid; grid-template-columns: repeat(7, 1fr); gap: 7px; flex: 1; min-width: 0; margin-left: 6px; font-size: 9px; }
.apps button { justify-content: flex-start; gap: 3px; min-width: 0; padding-left: 6px; border-bottom: 2px solid #76b0d8; }
.apps .on { background: #4a4a4a; margin-left: -4px; padding-left: 9px; }
.ticon { width: 19px; height: 19px; }
.apps .fold { gap: 5px; padding-left: 7px; font-size: 10px; }
.fold .ticon { width: 16px; height: 16px; }
.tray { display: flex; align-items: center; flex: none; width: 225px; padding-left: 35px; }
.tray button { width: 19px; margin-right: 1px; }
.lang { width: 30px; text-align: center; }
.clock { width: 54px; line-height: 16px; text-align: center; white-space: nowrap; margin-right: 9px; }
</style>
